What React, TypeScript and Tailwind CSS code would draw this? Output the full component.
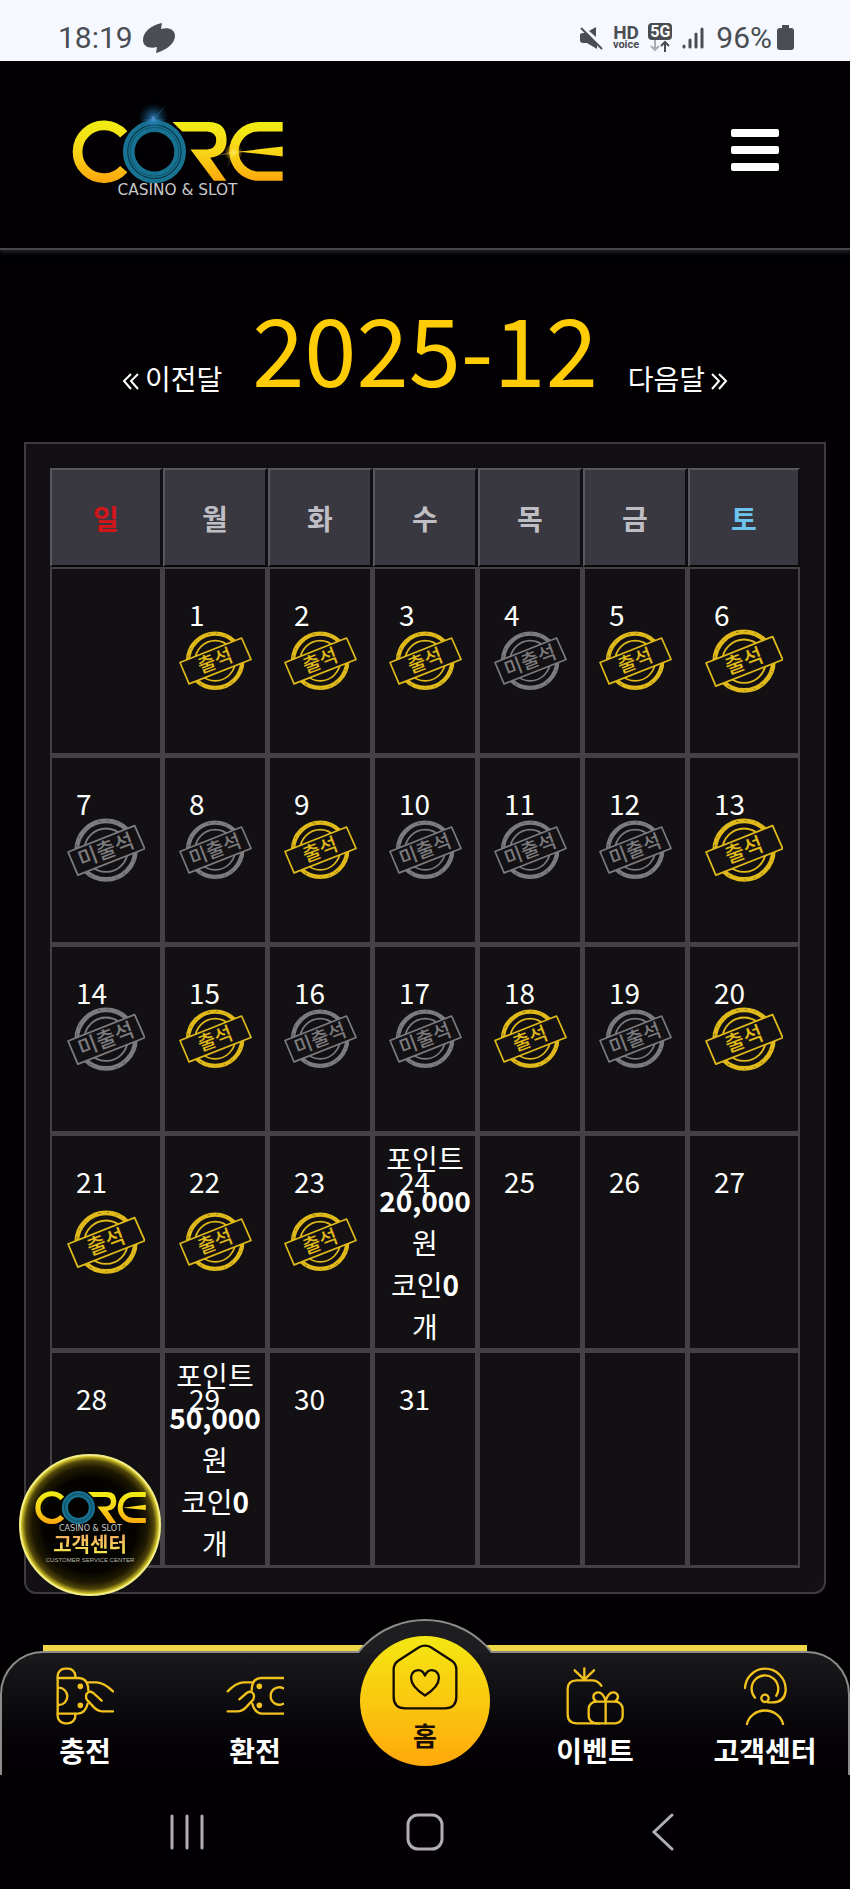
import { ReactNode } from 'react';

type Mark = 'in' | 'out';

interface Day {
  date?: number;
  mark?: Mark;
  point?: string;
}

const WEEKDAYS = ['일', '월', '화', '수', '목', '금', '토'];
const ATTENDED = [1, 2, 3, 5, 6, 9, 13, 15, 18, 20, 21, 22, 23];
const LAST_CHECKED = 23;
const REWARDS: Record<number, string> = { 24: '20,000', 29: '50,000' };

// December 2025 starts on a Monday
const FIRST_WEEKDAY = 1;
const DAYS_IN_MONTH = 31;

const buildWeeks = (): Day[][] => {
  const weeks: Day[][] = [];
  for (let w = 0; w < 5; w++) {
    const week: Day[] = [];
    for (let d = 0; d < 7; d++) {
      const date = w * 7 + d - FIRST_WEEKDAY + 1;
      if (date < 1 || date > DAYS_IN_MONTH) {
        week.push({});
        continue;
      }
      const mark = date > LAST_CHECKED ? undefined : ATTENDED.includes(date) ? 'in' : 'out';
      week.push({ date, mark, point: REWARDS[date] });
    }
    weeks.push(week);
  }
  return weeks;
};

function CoreLogo({ id, className, flare }: { id: string; className: string; flare?: boolean }) {
  return (
    <svg viewBox="216 310 632 282" className={className} role="img" aria-label="CORE Casino & Slot">
      <defs>
        <linearGradient id={`${id}-gold`} gradientUnits="userSpaceOnUse" x1="0" y1="362" x2="0" y2="550">
          <stop offset="0" stopColor="#f0ee14" />
          <stop offset="0.5" stopColor="#f8d617" />
          <stop offset="1" stopColor="#fca50c" />
        </linearGradient>
        <radialGradient id={`${id}-blue`}>
          <stop offset="0" stopColor="#7fb4ff" />
          <stop offset="0.2" stopColor="#2f8fd0" stopOpacity="0.7" />
          <stop offset="1" stopColor="#0a4a70" stopOpacity="0" />
        </radialGradient>
        <radialGradient id={`${id}-sun`}>
          <stop offset="0" stopColor="#fff27a" />
          <stop offset="0.4" stopColor="#fbd520" stopOpacity="0.6" />
          <stop offset="1" stopColor="#fbb40a" stopOpacity="0" />
        </radialGradient>
      </defs>
      <path d="M371 404 A79 79 0 1 0 371 508" fill="none" stroke={`url(#${id}-gold)`} strokeWidth="29" />
      <path
        d="M517 367 L546 395 H620 Q648 397 648 421 Q648 448 620 449 H571 L641 543 H678 L630 474 Q679 468 679 421 Q679 367 625 367 Z"
        fill={`url(#${id}-gold)`}
      />
      <path
        d="M847 367 H775 A88 88 0 0 0 775 543 H847 V515 H775 A60 60 0 0 1 775 395 H847 Z"
        fill={`url(#${id}-gold)`}
      />
      <path d="M715 456 L847 440 V470 Z" fill={`url(#${id}-gold)`} />
      <circle cx="463" cy="456" r="77" fill="none" stroke="#187291" strokeWidth="35" />
      <circle cx="463" cy="456" r="80" fill="none" stroke="#06313f" strokeWidth="3" />
      <circle cx="463" cy="456" r="73" fill="none" stroke="#0b4354" strokeWidth="2" />
      {flare && (
        <>
          <circle cx="460" cy="356" r="46" fill={`url(#${id}-blue)`} opacity="0.9" />
          <path d="M456 358 L500 314 L463 362 Z" fill="#2a6f9e" opacity="0.4" />
          <path d="M420 361 L460 358 L500 361 L460 364 Z" fill="#4fb4e8" opacity="0.4" />
          <circle cx="700" cy="458" r="28" fill={`url(#${id}-sun)`} />
          <path d="M650 468 L700 454 L740 455 L700 461 Z" fill="#ffe04a" opacity="0.4" />
          <path d="M714 412 L703 458 L678 508 L698 455 Z" fill="#ffe04a" opacity="0.3" />
        </>
      )}
      <text x="532" y="587" textAnchor="middle" fill="#c9c9cc" fontSize="46" fontFamily="DejaVu Sans, sans-serif">
        CASINO &amp; SLOT
      </text>
    </svg>
  );
}

function Stamp({ mark }: { mark: Mark }) {
  const color = mark === 'in' ? '#e0ba1a' : '#7c7b7e';
  return (
    <svg viewBox="0 0 218 178" className="w-[73%]" fill="none" stroke={color}>
      <circle cx="108" cy="89" r="81" strokeWidth="13" />
      <circle cx="108" cy="89" r="82" stroke="#131114" strokeWidth="2" strokeDasharray="5 23 3 41 8 17" opacity="0.6" />
      <circle cx="108" cy="89" r="60" strokeWidth="5" />
      <path d="M3 94 L187 21 L215 85 L30 158 Z" fill="#131114" strokeWidth="5" strokeLinejoin="round" />
      <text
        x="108"
        y="109"
        transform="rotate(-21 108 89)"
        textAnchor="middle"
        stroke="none"
        fill={color}
        fontSize="58"
        fontWeight="500"
        fontFamily="Noto Sans CJK KR, sans-serif"
      >
        {mark === 'in' ? '출석' : '미출석'}
      </text>
    </svg>
  );
}

function DayCell({ day }: { day: Day }) {
  return (
    <td className="relative border-t-2 border-b-[3px] border-l-2 border-r-[3px] last:border-r-2 border-[#434144] bg-[#121013] p-0 align-top">
      {day.date && <div className="pt-6 pl-6">{day.date}</div>}
      {day.mark && (
        <div className="absolute inset-0 flex items-center justify-center">
          <Stamp mark={day.mark} />
        </div>
      )}
      {day.point && (
        <div className="absolute inset-0 flex flex-col items-center justify-center">
          <span>포인트</span>
          <b>{day.point}</b>
          <span>원</span>
          <span>
            코인<b>0</b>
          </span>
          <span>개</span>
        </div>
      )}
    </td>
  );
}

function StatusBar() {
  return (
    <div className="flex h-[61px] items-center justify-between bg-[#f5f9ff] pt-[14px] pr-14 pl-[58px] font-['Roboto',sans-serif] text-[30px] leading-9 text-[#4a4e53]">
      <div className="flex items-center gap-[10px]">
        <span>18:19</span>
        <svg viewBox="0 0 32 30" className="h-[30px] w-8" fill="currentColor">
          <path d="M19 0 C8 2 0 9 0 17 C0 24 7 26 14 24 L13 30 C24 27 32 20 32 13 C32 6 25 4 18 6 Z" />
        </svg>
      </div>
      <div className="flex items-center">
        <svg viewBox="0 0 24 24" className="h-6 w-6" fill="currentColor">
          <path d="M1 9 Q1 7 4 7 H7 L18 18 V23 L8 17 H4 Q1 17 1 14 Z" />
          <path d="M10 5 L17 1 V11 Z" />
          <path d="M2 2 L23 23" stroke="currentColor" strokeWidth="2" />
        </svg>
        <div className="ml-[10px] flex flex-col items-center">
          <span className="text-[19px] leading-[14px] font-bold">HD</span>
          <span className="text-[11px] leading-[9px] font-bold">voice</span>
        </div>
        <div className="ml-[9px] flex flex-col items-center">
          <span className="rounded-sm bg-current px-[2px]">
            <span className="block text-[16px] leading-[17px] font-bold text-white">5G</span>
          </span>
          <svg viewBox="0 0 20 12" className="h-3 w-5" fill="none" strokeWidth="2">
            <path d="M5 0 V10 M1 6 L5 10 L9 6" stroke="#a9adb1" />
            <path d="M15 12 V2 M11 6 L15 2 L19 6" stroke="currentColor" />
          </svg>
        </div>
        <svg viewBox="0 0 22 24" className="mr-3 ml-[10px] h-6 w-[22px]" stroke="currentColor" strokeWidth="3" strokeLinecap="round">
          <path d="M2 20 V21 M8 14 V21 M14 8 V21 M20 3 V21" />
        </svg>
        <span>96%</span>
        <svg viewBox="0 0 17 25" className="ml-[5px] h-[25px] w-[17px]" fill="currentColor">
          <path d="M5 0 H12 V3 H14 Q17 3 17 6 V22 Q17 25 14 25 H3 Q0 25 0 22 V6 Q0 3 3 3 H5 Z" />
        </svg>
      </div>
    </div>
  );
}

function NavIcon({ children }: { children: ReactNode }) {
  return (
    <svg
      viewBox="0 0 174 174"
      className="h-[58px] w-[58px]"
      fill="none"
      stroke="#f2c21f"
      strokeWidth="7"
      strokeLinecap="round"
      strokeLinejoin="round"
    >
      {children}
    </svg>
  );
}

const DepositIcon = () => (
  <NavIcon>
    <path d="M58 32 V27 A22 22 0 0 0 36 5 H27 A22 22 0 0 0 5 27 V147 A22 22 0 0 0 27 169 H36 A22 22 0 0 0 58 147 V141" />
    <path d="M5 33 H68 Q92 34 96 58 L97 70 M5 140 H66 Q88 138 95 110" />
    <path d="M8 62 A26 26 0 1 1 8 114" />
    <path d="M96 46 H122 Q144 47 171 73 M98 104 L114 121 Q126 133 140 133 H171" />
    <path d="M137 101 L112 78 Q98 69 91 82 Q87 94 98 104" />
    <circle cx="73" cy="58" r="5" fill="#f2c21f" />
    <circle cx="73" cy="115" r="5" fill="#f2c21f" />
  </NavIcon>
);

const WithdrawIcon = () => (
  <NavIcon>
    <path d="M174 33 H106 Q82 34 78 58 L77 70 M174 140 H108 Q86 138 79 110" />
    <path d="M172 64 A26 26 0 1 0 172 110" />
    <path d="M78 46 H52 Q30 47 5 73 M76 104 L60 121 Q48 133 34 133 H5" />
    <path d="M40 97 L62 78 Q76 69 83 82 Q87 94 76 104" />
    <circle cx="100" cy="58" r="5" fill="#f2c21f" />
    <circle cx="100" cy="115" r="5" fill="#f2c21f" />
  </NavIcon>
);

const EventIcon = () => (
  <NavIcon>
    <path d="M106 56 Q96 40 78 40 H32 Q5 40 5 67 V141 Q5 169 33 169 H100" />
    <path d="M55 4 V38 M26 10 L55 38 L84 10" />
    <rect x="68" y="104" width="102" height="65" rx="22" />
    <path d="M119 104 V169" />
    <path d="M119 102 C114 84 104 75 94 76 C80 79 78 94 90 103" />
    <path d="M119 102 C124 84 134 75 144 76 C158 79 160 94 148 103" />
  </NavIcon>
);

const SupportIcon = () => (
  <NavIcon>
    <path d="M27 63 A61 61 0 0 1 87 5 A62 62 0 0 1 149 67 V72 Q145 106 110 106 H96" />
    <path d="M57 92 A40 40 0 1 1 121 86" />
    <circle cx="87" cy="94" r="11" />
    <path d="M33 171 A55 50 0 0 1 141 171" />
  </NavIcon>
);

function NavItem({ icon, label }: { icon: ReactNode; label: string }) {
  return (
    <a href="#" className="flex flex-1 flex-col items-center gap-1">
      {icon}
      <span className="whitespace-nowrap">{label}</span>
    </a>
  );
}

function BottomNav() {
  return (
    <div className="relative">
      <div className="mx-[43px] h-[6px] bg-[#edd64a]" />
      <nav className="relative rounded-t-[43px] border-x-2 border-t-2 border-[#8d8c8a] bg-linear-to-b from-[#1b191c] via-[#0a090b] to-[#020003] pt-[14px] pb-1 text-[28px] leading-[42px] font-bold text-white">
        {/* raised bump behind the home button */}
        <div className="absolute -top-[34px] left-1/2 h-[34px] w-[172px] -translate-x-1/2 overflow-hidden">
          <div className="h-[172px] rounded-full border-2 border-[#8d8c8a] bg-[#1e1d1f]" />
        </div>
        <div className="-mx-[2px] flex">
          <NavItem icon={<DepositIcon />} label="충전" />
          <NavItem icon={<WithdrawIcon />} label="환전" />
          <div className="flex-1" />
          <NavItem icon={<EventIcon />} label="이벤트" />
          <NavItem icon={<SupportIcon />} label="고객센터" />
        </div>
        <a
          href="#"
          className="absolute -top-[17px] left-1/2 flex h-[130px] w-[130px] -translate-x-1/2 flex-col items-center gap-1 rounded-full bg-linear-to-b from-[#f3e712] to-[#fea80b] pt-2 text-[26px] text-[#1a0d05]"
        >
          <svg viewBox="0 0 200 200" className="h-[66px] w-[66px]" fill="none" stroke="#120a04" strokeWidth="7" strokeLinejoin="round">
            <path d="M82 10 Q100 0 118 10 L180 50 Q195 60 195 78 V160 Q195 195 160 195 H40 Q5 195 5 160 V78 Q5 60 20 50 Z" />
            <path d="M100 96 C90 70 58 76 58 104 C58 126 84 146 100 156 C116 146 142 126 142 104 C142 76 110 70 100 96 Z" />
          </svg>
          <span>홈</span>
        </a>
      </nav>
    </div>
  );
}

function SystemBar() {
  return (
    <div className="flex h-[114px] items-center justify-between bg-[#020003] px-[168px] text-[#b0aeb1]">
      <button aria-label="최근 앱">
        <svg viewBox="0 0 38 38" className="h-[38px] w-[38px]" stroke="currentColor" strokeWidth="3" strokeLinecap="round">
          <path d="M4 3 V35 M19 3 V35 M34 3 V35" />
        </svg>
      </button>
      <button aria-label="홈 화면">
        <svg viewBox="0 0 38 38" className="h-[38px] w-[38px]" fill="none" stroke="currentColor" strokeWidth="3">
          <rect x="2" y="2" width="34" height="34" rx="10" />
        </svg>
      </button>
      <button aria-label="뒤로">
        <svg viewBox="0 0 38 38" className="h-[38px] w-[38px]" fill="none" stroke="currentColor" strokeWidth="3" strokeLinecap="round">
          <path d="M28 2 L10 19 L28 36" />
        </svg>
      </button>
    </div>
  );
}

export default function App() {
  const weeks = buildWeeks();

  return (
    <div className="relative bg-[#020003] font-['Noto_Sans_CJK_KR',sans-serif] text-white">
      <StatusBar />

      <header className="flex items-center justify-between border-b-2 border-[#48464a] pt-[42px] pr-[71px] pb-[51px] pl-[72px] shadow-[0_3px_3px_#1d1c1f]">
        <a href="#">
          <CoreLogo id="head" className="w-[211px] overflow-visible" flare />
        </a>
        <button aria-label="메뉴" className="flex w-12 flex-col gap-[9px]">
          <span className="h-2 rounded-[2px] bg-white" />
          <span className="h-2 rounded-[2px] bg-white" />
          <span className="h-2 rounded-[2px] bg-white" />
        </button>
      </header>

      <main className="mx-6 pb-[51px]">
        <div className="flex items-end justify-center gap-[30px] py-12 text-[28px] leading-8">
          <a href="#" className="flex items-baseline gap-[6px]">
            <svg viewBox="0 0 17 17" className="h-[17px] w-[17px]" fill="none" stroke="white" strokeWidth="2">
              <path d="M9 1 L2 8 L9 16 M16 1 L9 8 L16 16" />
            </svg>
            이전달
          </a>
          <h1 className="text-[94px] leading-[96px] font-normal text-[#ffcc05]">2025-12</h1>
          <a href="#" className="flex items-baseline gap-[6px]">
            다음달
            <svg viewBox="0 0 17 17" className="h-[17px] w-[17px]" fill="none" stroke="white" strokeWidth="2">
              <path d="M1 1 L8 8 L1 16 M8 1 L15 8 L8 16" />
            </svg>
          </a>
        </div>

        <section className="rounded-b-xl border-2 border-[#3d3b3e] bg-[#121014] p-6">
          <table className="w-full table-fixed border-separate border-spacing-0 text-[28px] leading-[42px]">
            <thead>
              <tr className="h-[99px]">
                {WEEKDAYS.map((name) => (
                  <th
                    key={name}
                    className="border-t-2 border-r-[3px] border-b-2 border-l-2 border-t-[#58575b] border-r-[#0f0e15] border-b-[#08070a] border-l-[#58575b] bg-[#393841] p-0 font-bold text-[#bfbec4] first:w-[113px] first:text-[#d3161a] last:w-[112px] last:border-r-2 last:text-[#6cc4ee]"
                  >
                    {name}
                  </th>
                ))}
              </tr>
            </thead>
            <tbody>
              {weeks.map((week, i) => (
                <tr key={i} className={week.some((d) => d.point) ? 'h-[217px]' : 'h-[189px]'}>
                  {week.map((day, j) => (
                    <DayCell key={j} day={day} />
                  ))}
                </tr>
              ))}
            </tbody>
          </table>
        </section>
      </main>

      <BottomNav />
      <SystemBar />

      {/* floating support button */}
      <a
        href="#"
        className="absolute bottom-[293px] left-[19px] flex h-[142px] w-[142px] flex-col items-center rounded-full border-2 border-[#f3ee8a] bg-[radial-gradient(circle_closest-side,#040300_68%,#1f1902_84%,#51460a_93%,#dccd2c_100%)] pt-[26px]"
      >
        <CoreLogo id="float" className="w-[111px] overflow-visible" />
        <span className="bg-linear-to-b from-[#f0a060] to-[#f6f04a] bg-clip-text text-[20px] leading-6 font-bold text-transparent">
          고객센터
        </span>
        <span className="font-['Liberation_Sans',sans-serif] text-[6px] leading-2 whitespace-nowrap text-[#b9b7a8]">
          CUSTOMER SERVICE CENTER
        </span>
      </a>
    </div>
  );
}
